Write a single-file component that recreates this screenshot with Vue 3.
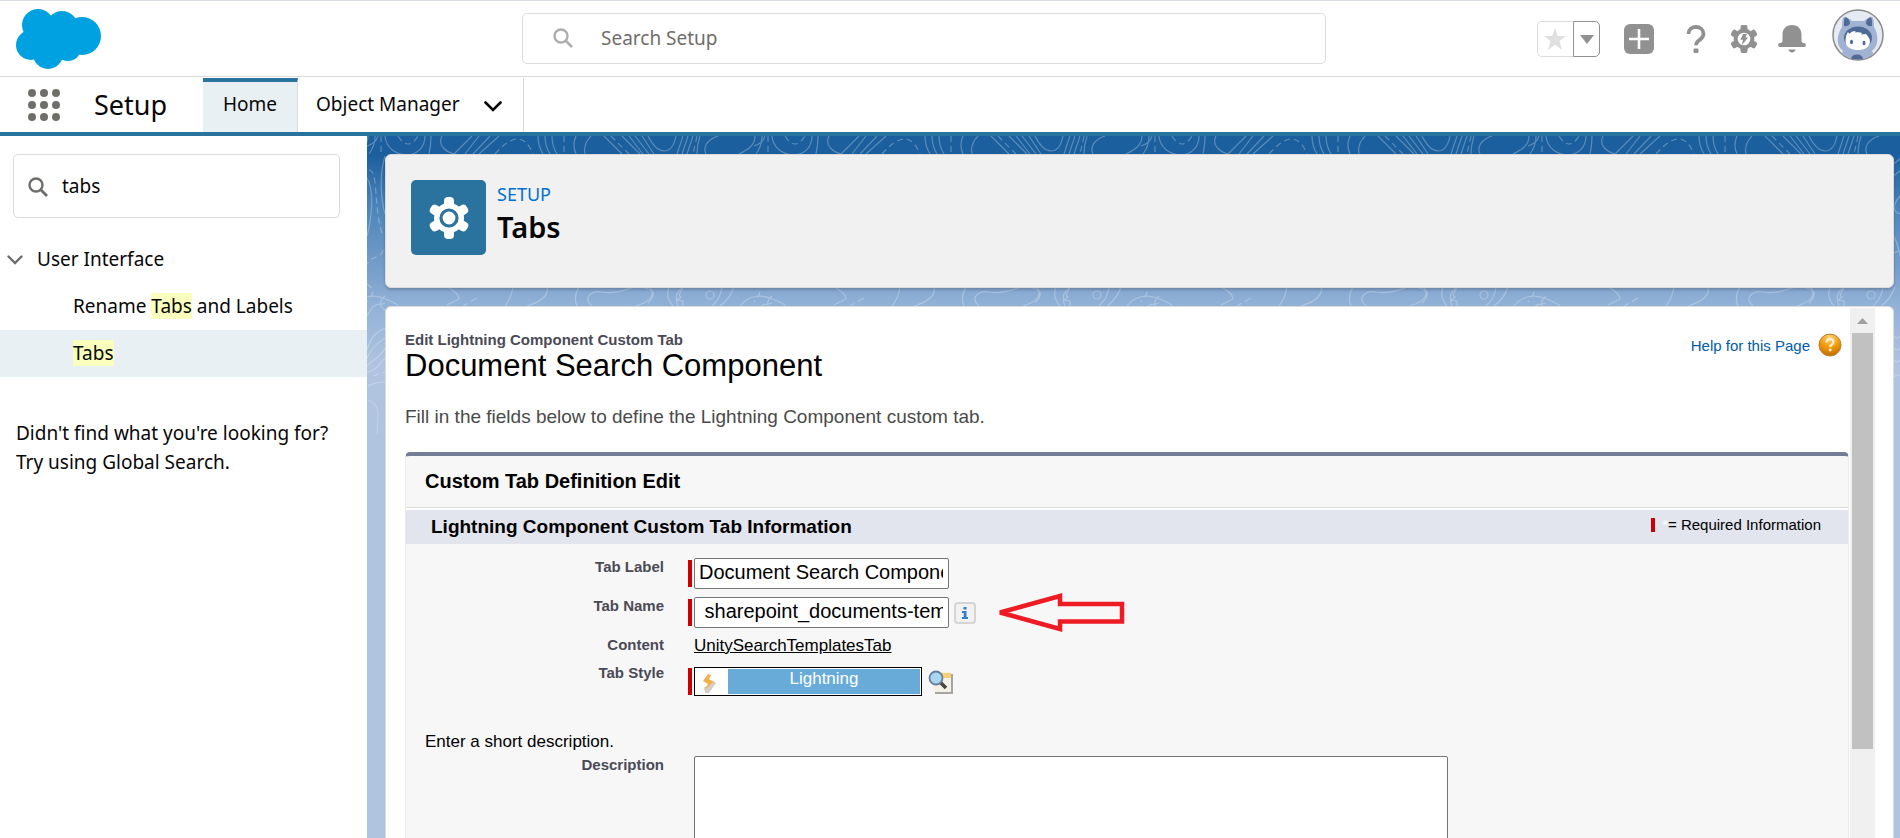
<script setup>
import { ref } from 'vue'

const globalQuery = ref('')
const treeQuery = ref('tabs')
const tabLabel = ref('Document Search Component')
const tabName = ref(' sharepoint_documents-templates')
const tabStyle = ref('Lightning')
const description = ref('')

const dots = [0, 1, 2].flatMap((row) => [0, 1, 2].map((col) => ({ x: 4 + col * 12, y: 4 + row * 12 })))
</script>

<template>
  <div class="app">
    <header class="global">
      <a class="logo" href="#" aria-label="Salesforce home">
        <svg width="86" height="61" viewBox="16 9 86 61" fill="#00a1e0" aria-hidden="true">
          <circle cx="38" cy="25" r="16" />
          <circle cx="62" cy="27" r="16" />
          <circle cx="82" cy="36" r="19" />
          <circle cx="31" cy="45" r="15" />
          <circle cx="48" cy="54" r="15" />
          <circle cx="68" cy="48" r="13" />
          <path d="M30 30h40v24H34z" />
        </svg>
      </a>
      <div class="global-search">
        <svg width="20" height="20" viewBox="0 0 20 20" fill="none" stroke="#aeaeac" aria-hidden="true">
          <circle cx="8" cy="8" r="6.5" stroke-width="2.4" />
          <path d="M13 13l6 6" stroke-width="2.6" />
        </svg>
        <input v-model="globalQuery" type="search" placeholder="Search Setup" aria-label="Search Setup" />
      </div>
      <div class="actions">
        <div class="favorites">
          <button class="star" type="button" aria-label="Favorite" disabled>
            <svg width="24" height="24" viewBox="0 0 24 24" fill="#e0e0e0"><path d="M12 1l2.8 8H23l-6.500 5 2.500 9-7-5.300L5 23l2.500-9L1 9h8.200z" /></svg>
          </button>
          <button class="caret" type="button" aria-label="Favorites list">
            <svg width="14" height="9" viewBox="0 0 14 9" fill="#919191"><path d="M0 0h14L7 9z" /></svg>
          </button>
        </div>
        <button class="icon plus" type="button" aria-label="Global actions">
          <svg width="30" height="30" viewBox="0 0 30 30"><rect width="30" height="30" rx="6" fill="#919191" /><path d="M15 5v20M5 15h20" stroke="#fff" stroke-width="2.600" /></svg>
        </button>
        <button class="icon help" type="button" aria-label="Help">
          <svg width="20" height="28" viewBox="0 0 20 28"><path d="M2.500 9C2.500 4.500 6 2 10 2s7.500 2.600 7.500 6.800c0 3.500-2 4.800-4 6.200-2.200 1.500-3.500 2.500-3.500 5.200" fill="none" stroke="#919191" stroke-width="3.800" /><rect x="7.500" y="23.500" width="5" height="4.500" rx="1" fill="#919191" /></svg>
        </button>
        <button class="icon gear" type="button" aria-label="Setup menu">
          <svg width="28" height="28" viewBox="-14 -14 28 28">
            <g fill="#919191">
              <circle r="10.400" />
              <rect v-for="a in 6" :key="a" x="-3.500" y="-14" width="7" height="7" rx="2" :transform="`rotate(${a * 60})`" />
            </g>
            <circle r="6.300" fill="#fff" />
            <path d="M-1-5h4L1.500-1.400H4L-2 6l1-5.200h-2.600z" fill="#919191" />
          </svg>
        </button>
        <button class="icon bell" type="button" aria-label="Notifications">
          <svg width="28" height="28" viewBox="0 0 28 28" fill="#919191"><path d="M14 0c6 0 9.500 4 9.500 9.500v6c0 1.500.6 2.500 2.500 2.500 3 .8 2 4 0 4H2c-2 0-3-3.200 0-4 1.900 0 2.500-1 2.500-2.500v-6C4.500 4 8 0 14 0zM10.500 24.500h7c-.6 4-6.400 4-7 0z" /></svg>
        </button>
        <button class="icon avatar" type="button" aria-label="View profile">
          <svg width="52" height="52" viewBox="0 0 52 52">
            <defs><clipPath id="face-clip"><circle cx="26" cy="26" r="24.500" /></clipPath></defs>
            <circle cx="26" cy="26" r="25" fill="#e6eaf2" stroke="#8a8a8a" stroke-width="1.500" />
            <g clip-path="url(#face-clip)">
              <path d="M10 18c0-8 1-11 4-10 2 .6 4 2.500 6 4h12c2-1.500 4-3.400 6-4 3-1 4 2 4 10 3 5 4 10 3 16-1 5-5 8-5 8l5 10H7l4-10s-4-3-5-8c-1-6 1-11 4-16z" fill="#a0b3d2" />
              <path d="M12 17c0-6 0-9 2-8.500 2 .5 4 3 4 6-1 2-3 3-6 2.500zM40 17c0-6 0-9-2-8.500-2 .5-4 3-4 6 1 2 3 3 6 2.500z" fill="#4f6a94" />
              <ellipse cx="26" cy="29" rx="14" ry="11.500" fill="#4f6a94" />
              <path d="M13.500 32c0-4 1-7 2.500-9l1.500 2c1-2 3.500-3 6-3l-.5 1.500c3-.6 5-.5 7 .5l-1 1.500 5-.5c1.500 2 4 4 4 7.500 0 6-6 8.500-12 8.500s-12.500-2.500-12.500-9z" fill="#fff" />
              <ellipse cx="19.500" cy="33" rx="1.500" ry="2.200" fill="#4f6a94" />
              <ellipse cx="32" cy="34" rx="1.500" ry="2.200" fill="#4f6a94" />
              <ellipse cx="25" cy="50" rx="6" ry="4.500" fill="#4f6a94" />
            </g>
          </svg>
        </button>
      </div>
    </header>

    <nav class="nav" aria-label="Setup">
      <button class="launcher" type="button" aria-label="App launcher">
        <svg width="32" height="32" viewBox="0 0 32 32" fill="#706e6b"><circle v-for="d in dots" :key="`${d.x}-${d.y}`" :cx="d.x" :cy="d.y" r="4" /></svg>
      </button>
      <span class="app-name">Setup</span>
      <a class="tab active" href="#">Home</a>
      <div class="tab object">
        <a href="#">Object Manager</a>
        <button type="button" aria-label="Object Manager list">
          <svg width="18" height="11" viewBox="0 0 18 11" fill="none" stroke="#080707" stroke-width="2.600" stroke-linecap="round"><path d="M1.500 1.500L9 9l7.500-7.500" /></svg>
        </button>
      </div>
    </nav>

    <div class="body">
      <aside class="sidebar">
        <div class="tree-search">
          <svg width="20" height="20" viewBox="0 0 20 20" fill="none" stroke="#706e6b" aria-hidden="true">
            <circle cx="8" cy="8" r="6.500" stroke-width="2.400" />
            <path d="M12.500 12.500l6.500 6.500" stroke-width="2.800" />
          </svg>
          <input v-model="treeQuery" type="text" aria-label="Quick Find" />
        </div>
        <button class="branch" type="button" aria-expanded="true">
          <svg width="16" height="10" viewBox="0 0 16 10" fill="none" stroke="#706e6b" stroke-width="2.400" stroke-linecap="round"><path d="M1.500 1.500L8 8l6.500-6.500" /></svg>
          <span>User Interface</span>
        </button>
        <a class="leaf" href="#"><span>Rename <mark>Tabs</mark> and Labels</span></a>
        <a class="leaf selected" href="#"><span><mark>Tabs</mark></span></a>
        <p class="hint">Didn't find what you're looking for?<br />Try using Global Search.</p>
      </aside>

      <main class="main">
        <svg class="contours" width="100%" height="330" aria-hidden="true">
          <defs>
            <linearGradient id="fade" x1="0" y1="0" x2="0" y2="1">
              <stop offset="0" stop-color="#fff" stop-opacity=".28" />
              <stop offset=".7" stop-color="#fff" stop-opacity=".26" />
              <stop offset="1" stop-color="#fff" stop-opacity=".15" />
            </linearGradient>
            <pattern id="topo" x="337" y="0" width="387" height="330" patternUnits="userSpaceOnUse">
              <g fill="none" stroke="#fff" stroke-width="1.200">
                <path d="M14 0C2 4-1 12 2 18M51 0c0 10-8 14-16 18M58 0q0 10-6 18M68 0c2 24 40 26 40 0M114 0q0 10-2 18M125 0c-5 10 5 16 12 18M155 0l-18 18M162 0l-14 18M173 0l-17 18M182 0l-20 18M221 0q0 10 5 18M228 0q0 10 5 18M235 0q0 10 5 18M259 0q-4 9 0 18M274 0q-8 8-6 18M287 0l18 18M305 0l18 18M312 0l14 18M318 0l14 18M325 0l12 18M331 0c10 20 24 20 28 0M366 0l-6 18M371 0l-6 18M376 0l-6 18M383 0q-3 9-3 18" />
                <path d="M64 0v18M81 0q10 16 20 0M178 18q26-30 38 0M247 0v18M294 0l18 18M380 0l-4 18" stroke-dasharray="6 4" />
                <path d="M-30 151c3 12-6 14-18 17M-53 151q4 8-14 12M-42 170c10-6 10-10 12-19M-26 170c-4-10 0-14 6-19M-22 151c-2 6-6 8-2 10l-4 3 6 1v5M18 151c-1 10-6 15-10 19M30 151q-4 12-14 19M36 170c8-10 20-12 30-8 8 3 14 6 16 8M10 159a4 4 0 1 0-8 0 4 4 0 1 0 8 0M-14 170q4-10 8 0M130 151c8 4 12 8 12 12l-12 6M196 151q-2 12-8 19M230 151c2 8-4 14-20 19M262 151q-6 10-2 19M275 170c-10-8 0-16 10-14 14 2 22-2 32-5 20 0 24 6 14 16M333 151q8 12-14 19M352 151q-4 10 4 19M361 170c-4-10 0-16 6-19M366 151c-2 6-6 8-2 10l-4 3 6 1v5" />
                <path d="M142 151h20M160 162l-14 8" stroke-dasharray="7 4" />
                <path d="M50 10q9-3 11-10M50 42c8 12 4 44 0 58M68 20c-6 20-4 44 0 58M50 180c8-16 12-10 18-13M68 174c-10-6 0-14 0-14M50 214c4-14 10-18 18-22M50 222c6-12 10-14 18-20M50 230c6-8 12-6 18-18M50 236c8 0 12-8 18-14M50 250q10-4 18-4M50 264c16 4 10 20 10 34M35 60c-7 8-8 16 0 18M27 96q10 20 10 40M26 118l10-4M26 196q6 12 12 0M26 208q6 12 12 0M26 220q6 12 12 0M26 244q8-10 12 0M26 30l10-8M26 42l10-8" />
                <path d="M52 34c10 0 4 40 14 66M66 114c-2 10-10 4-16 14M50 148c12 8 2 14 0 18M56 240l12-4" stroke-dasharray="6 4" />
              </g>
            </pattern>
            <mask id="topo-mask"><rect width="100%" height="330" fill="url(#topo)" /></mask>
          </defs>
          <rect width="100%" height="330" fill="url(#fade)" mask="url(#topo-mask)" />
        </svg>

        <section class="card page-header">
          <div class="badge">
            <svg width="42" height="42" viewBox="-21 -21 42 42" aria-hidden="true">
              <g fill="#fff">
                <circle r="15" />
                <rect v-for="a in 6" :key="a" x="-5" y="-21" width="10" height="12" rx="4" :transform="`rotate(${a * 60})`" />
              </g>
              <circle r="8" fill="none" stroke="#2a739e" stroke-width="3.200" />
            </svg>
          </div>
          <div class="heading">
            <p>SETUP</p>
            <h1>Tabs</h1>
          </div>
        </section>

        <section class="card panel">
          <div class="content">
            <div class="title-row">
              <div>
                <p class="eyebrow">Edit Lightning Component Custom Tab</p>
                <h2>Document Search Component</h2>
              </div>
              <a class="help-link" href="#">
                <span>Help for this Page</span>
                <svg width="24" height="24" viewBox="0 0 24 24" aria-hidden="true">
                  <defs><radialGradient id="orb" cx=".5" cy=".15" r=".9"><stop offset="0" stop-color="#ffd27a" /><stop offset=".5" stop-color="#f39a0c" /><stop offset="1" stop-color="#b86a00" /></radialGradient></defs>
                  <circle cx="12" cy="12" r="11" fill="url(#orb)" stroke="#b8812f" />
                  <path d="M8.500 9.500c0-4.500 7-4.500 7-.5 0 2.500-3.300 2.500-3.300 5" fill="none" stroke="#fff3d6" stroke-width="2.200" />
                  <circle cx="12.200" cy="17" r="1.400" fill="#fff3d6" />
                </svg>
              </a>
            </div>
            <p class="intro">Fill in the fields below to define the Lightning Component custom tab.</p>

            <form class="block" @submit.prevent>
              <h3>Custom Tab Definition Edit</h3>
              <div class="subhead">
                <h4>Lightning Component Custom Tab Information</h4>
                <p class="legend"><i></i><span class="asterisk">*</span>= Required Information</p>
              </div>
              <div class="fields">
                <div class="row">
                  <label for="tab-label">Tab Label</label>
                  <div class="field required"><input id="tab-label" v-model="tabLabel" type="text" /></div>
                </div>
                <div class="row">
                  <label for="tab-name">Tab Name</label>
                  <div class="field required">
                    <input id="tab-name" v-model="tabName" type="text" />
                    <button class="info" type="button" aria-label="Tab Name help">
                      <svg width="8" height="12" viewBox="0 0 8 12" fill="#2e7fd0"><rect x="2.500" width="3" height="2.500" /><path d="M1 4h4.500v6H7v2H1v-2h1.700V6H1z" /></svg>
                    </button>
                    <svg class="arrow" width="132" height="40" viewBox="0 0 132 40" fill="none" stroke="#ed1c24" stroke-width="4.500" aria-hidden="true"><path d="M6 19.500L66 3v8h62v17.500H66V36z" stroke-miterlimit="2" /></svg>
                  </div>
                </div>
                <div class="row">
                  <span class="label">Content</span>
                  <div class="field"><a class="content-link" href="#">UnitySearchTemplatesTab</a></div>
                </div>
                <div class="row style-row">
                  <label for="tab-style">Tab Style</label>
                  <div class="field required">
                    <div class="swatch">
                      <svg width="20" height="24" viewBox="0 0 20 24" aria-hidden="true"><path d="M4 17l4-1 5-3 1-2 2 2-7 10H5z" fill="#d2cfc8" /><path d="M8 4L3 11l5 3-4 6 10-8-5-3 2-4z" fill="#f3b04a" /></svg>
                      <input id="tab-style" v-model="tabStyle" type="text" readonly />
                    </div>
                    <button class="lookup" type="button" aria-label="Tab Style lookup">
                      <svg width="25" height="24" viewBox="0 0 25 24">
                        <path d="M7 4h18v20H7z" fill="#a6a6a0" />
                        <path d="M5 2h18v20H5z" fill="#f3f1e6" />
                        <path d="M13 3h10v5H13z" fill="#f8cf76" />
                        <path d="M12 12l6 6" stroke="#4a4540" stroke-width="3.600" />
                        <circle cx="8" cy="8" r="6.500" fill="#a9d6f2" stroke="#64809a" stroke-width="1.800" />
                      </svg>
                    </button>
                  </div>
                </div>
                <p class="note">Enter a short description.</p>
                <div class="row">
                  <label for="description">Description</label>
                  <div class="field offset"><textarea id="description" v-model="description"></textarea></div>
                </div>
              </div>
            </form>
          </div>
          <div class="scrollbar" aria-hidden="true">
            <svg width="11" height="6" viewBox="0 0 11 6" fill="#a0a0a0"><path d="M0 6h11L5.500 0z" /></svg>
            <div class="thumb"></div>
          </div>
        </section>
      </main>
    </div>
  </div>
</template>

<style>
body {
  overflow: hidden;
}
</style>

<style scoped>
.app,
.app * {
  box-sizing: border-box;
}
.app {
  display: flex;
  flex-direction: column;
  height: 100vh;
  background: #fff;
  color: #080707;
  font: 19px/28px "Noto Sans", sans-serif;
}
h1, h2, h3, h4, p {
  margin: 0;
}
button {
  display: flex;
  align-items: center;
  justify-content: center;
  padding: 0;
  border: 0;
  background: none;
  color: inherit;
  font: inherit;
}
a {
  color: inherit;
  text-decoration: none;
}
input, textarea {
  border: 0;
  outline: 0;
  font: inherit;
  color: inherit;
  min-width: 0;
}
svg {
  display: block;
  flex: none;
}

.global {
  display: grid;
  grid-template-columns: 1fr 804px 1fr;
  align-items: start;
  flex: none;
  height: 77px;
  padding: 0 16px 0 16px;
  border-top: 1px solid #d8dde6;
  border-bottom: 1px solid #dddbda;
}
.logo {
  justify-self: start;
  margin-top: 8px;
}
.global-search {
  display: flex;
  align-items: center;
  gap: 26px;
  height: 51px;
  width: 804px;
  margin: 12px 0 0 -26px;
  padding: 0 30px;
  border: 1px solid #dddbda;
  border-radius: 5px;
}
.global-search svg {
  margin-top: -2px;
}
.global-search input {
  flex: 1;
  padding: 0 2px 2px;
  background: none;
}
.global-search input::placeholder {
  color: #706e6b;
  opacity: 1;
}
.actions {
  display: flex;
  justify-content: flex-end;
  align-items: center;
  height: 60px;
  margin-top: 8px;
}
.favorites {
  display: flex;
  height: 36px;
  margin-right: 24px;
}
.star {
  width: 36px;
  padding-right: 2px;
  border: 1px solid #dddbda;
  border-right: 0;
  border-radius: 5px 0 0 5px;
}
.caret {
  width: 27px;
  border: 1px solid #919191;
  border-radius: 0 5px 5px 0;
}
.plus {
  margin-right: 32px;
}
.help {
  margin-right: 24px;
}
.gear {
  margin-right: 20px;
}
.bell {
  margin-right: 26px;
}
.avatar {
  align-self: flex-start;
}

.nav {
  display: flex;
  flex: none;
  height: 59px;
  padding-top: 1px;
  border-bottom: 4px solid #2a739e;
}
.launcher {
  width: 32px;
  margin-left: 28px;
}
.app-name {
  width: 109px;
  margin-left: 34px;
  font-size: 27px;
  line-height: 54px;
}
.tab {
  display: flex;
  align-items: center;
  border-right: 1px solid #dddbda;
}
.active {
  justify-content: center;
  width: 95px;
  padding-bottom: 6px;
  border-top: 4px solid #2a739e;
  background: #e8f0f3;
}
.object {
  gap: 24px;
  padding: 0 21px 2px 18px;
}
.object button {
  padding-top: 4px;
}

.body {
  display: flex;
  flex: 1;
  min-height: 0;
}
.sidebar {
  flex: none;
  width: 367px;
  padding-top: 18px;
}
.tree-search {
  display: flex;
  align-items: center;
  gap: 14px;
  height: 64px;
  margin: 0 27px 0 13px;
  padding: 2px 15px 0 14px;
  border: 1px solid #dddbda;
  border-radius: 5px;
}
.tree-search input {
  flex: 1;
  padding: 0 0 2px;
}
.branch {
  gap: 14px;
  height: 47px;
  margin-top: 18px;
  padding-left: 7px;
}
.branch span {
  padding-bottom: 2px;
}
.leaf {
  display: flex;
  align-items: center;
  height: 47px;
  padding: 0 0 2px 73px;
}
.selected {
  background: #e8f0f3;
}
mark {
  background: #faffbd;
  color: inherit;
}
.hint {
  margin-top: 42px;
  padding-left: 16px;
  line-height: 29px;
  white-space: nowrap;
}

.main {
  position: relative;
  display: flex;
  flex: 1;
  flex-direction: column;
  gap: 18px;
  min-width: 0;
  padding: 18px 6px 0 18px;
  background: linear-gradient(#1b5f9e 0, #1b5f9e 18px, #4f87bb 76px, #7fa3cd 144px, #8fb0d6 165px, #b0c4df 230px, #b0c4df 100%);
}
.contours {
  position: absolute;
  top: 0;
  left: 0;
}
.card {
  position: relative;
  border: 1px solid #dddbda;
  border-radius: 6px;
}
.page-header {
  display: flex;
  flex: none;
  gap: 11px;
  height: 134px;
  padding: 25px;
  background: #f1f1f1;
  box-shadow: 0 2px 3px rgba(0, 0, 0, .2);
}
.badge {
  display: flex;
  align-items: center;
  justify-content: center;
  width: 75px;
  height: 75px;
  border-radius: 5px;
  background: #2a739e;
}
.heading p {
  color: #0070d2;
  font-size: 18px;
}
.heading h1 {
  font-size: 29px;
  line-height: 38px;
  font-weight: 600;
}

.panel {
  display: flex;
  flex: 1;
  min-height: 0;
  padding: 1px 18px 0 19px;
  border-bottom: 0;
  border-radius: 6px 6px 0 0;
  background: #fff;
  font-family: "Liberation Sans", Arial, sans-serif;
  color: #000;
}
.content {
  flex: 1;
  min-width: 0;
  padding-top: 23px;
  overflow: hidden;
}
.title-row {
  display: flex;
  justify-content: space-between;
  align-items: flex-start;
}
.eyebrow {
  color: #4a4a56;
  font-size: 15px;
  line-height: 18px;
  font-weight: 700;
}
h2 {
  font-size: 31px;
  line-height: 34px;
  font-weight: 400;
}
.help-link {
  display: flex;
  align-items: center;
  gap: 8px;
  padding-right: 7px;
  color: #015ba7;
  font-size: 15px;
  line-height: 24px;
}
.help-link span {
  padding-top: 3px;
}
.intro {
  margin: 22px 0 23px;
  color: #4a4a4a;
  font-size: 19px;
  line-height: 24px;
}
.block {
  border: 1px solid #eaeaea;
  border-top: 4px solid #747e96;
  border-radius: 5px 5px 0 0;
  background: #f7f7f7;
}
h3 {
  padding-left: 19px;
  border-bottom: 1px solid #dbdbdb;
  font-size: 20px;
  line-height: 51px;
}
.subhead {
  display: flex;
  justify-content: space-between;
  height: 36px;
  padding: 0 27px 0 25px;
  border-top: 2px solid #fff;
  background: #e2e4ee;
}
h4 {
  font-size: 19px;
  line-height: 34px;
}
.legend {
  display: flex;
  align-items: center;
  height: 30px;
  font-size: 15px;
  line-height: 30px;
}
.legend i {
  width: 4px;
  height: 14px;
  margin-right: 7px;
  background: #c00;
}
.asterisk {
  color: #fff;
}
.fields {
  display: flex;
  flex-direction: column;
  gap: 8px;
  padding-top: 14px;
}
.row {
  display: grid;
  grid-template-columns: 258px 1fr;
  column-gap: 24px;
}
label, .label {
  color: #4a4a56;
  font-size: 15px;
  line-height: 18px;
  font-weight: 700;
  text-align: right;
}
.field {
  display: flex;
  align-items: center;
}
.required::before {
  content: "";
  flex: none;
  width: 4px;
  height: 27px;
  margin-right: 2px;
  background: #c00;
}
.field > input {
  width: 255px;
  height: 31px;
  padding: 0 5px 2px 4px;
  border: 1px solid #767676;
  border-radius: 2px;
  background: #fff;
  font-size: 20px;
}
.info {
  width: 22px;
  height: 22px;
  margin-left: 5px;
  border: 2px solid #d5d5d5;
  border-radius: 4px;
  background: #f2f2f2;
}
.arrow {
  margin: -5px 0 -5px 18px;
}
.content-link {
  margin-left: 6px;
  font-size: 17px;
  line-height: 20px;
  text-decoration: underline;
}
.style-row .field {
  padding-top: 3px;
}
.swatch {
  display: flex;
  align-items: center;
  width: 228px;
  height: 29px;
  padding: 1px 1px 1px 5px;
  border: 1px solid #000;
  background: #fff;
}
.swatch input {
  flex: 1;
  height: 25px;
  margin-left: 8px;
  padding: 0 0 6px;
  background: #68abd9;
  color: #fff;
  font-size: 17px;
  text-align: center;
}
.lookup {
  margin-left: 6px;
}
.note {
  margin: 28px 0 -4px;
  padding-left: 19px;
  font-size: 17px;
  line-height: 20px;
}
.offset {
  padding-left: 6px;
}
textarea {
  width: 754px;
  height: 120px;
  border: 1px solid #767676;
  border-radius: 2px;
  background: #fff;
  resize: none;
}
.scrollbar {
  display: flex;
  flex: none;
  flex-direction: column;
  align-items: center;
  width: 25px;
  margin-left: 1px;
  padding-top: 10px;
  background: #f0f0f0;
}
.thumb {
  width: 21px;
  height: 80%;
  margin-top: 9px;
  background: #c1c1c1;
}
</style>
